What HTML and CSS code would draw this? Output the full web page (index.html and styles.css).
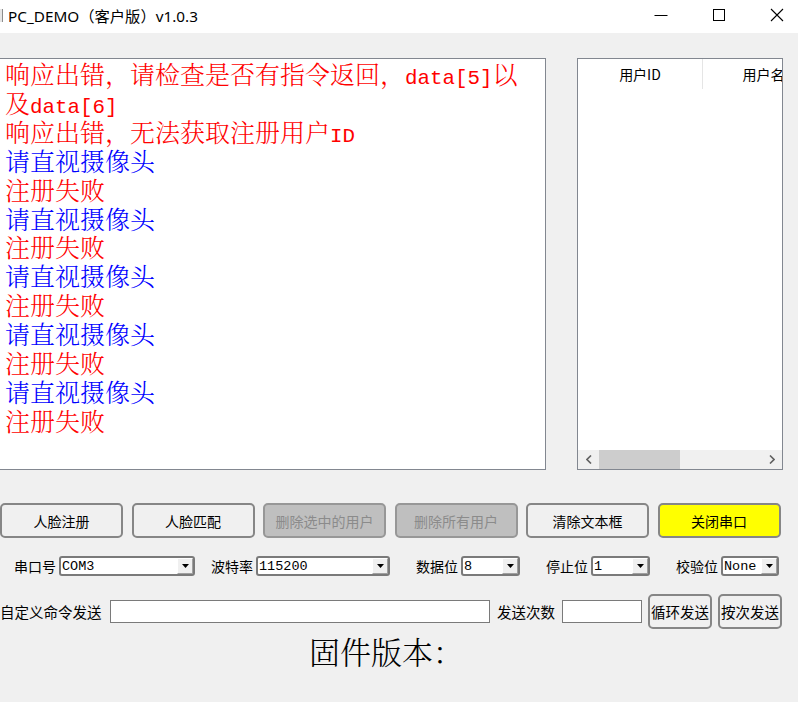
FILE: index.html
```html
<!DOCTYPE html>
<html lang="zh-CN">
<head>
<meta charset="utf-8">
<title>PC_DEMO（客户版）v1.0.3</title>
<link rel="stylesheet" href="styles.css">
</head>
<body>
<div class="window">
  <header class="titlebar">
    <span class="app-icon"></span>
    <span class="title">PC_DEMO（客户版）v1.0.3</span>
    <div class="controls">
      <button class="ctl" aria-label="minimize"><svg width="14" height="14" viewBox="0 0 14 14"><path d="M0.5 7.5H13.5" stroke="#000" stroke-width="1"/></svg></button>
      <button class="ctl" aria-label="maximize"><svg width="14" height="14" viewBox="0 0 14 14"><rect x="1.5" y="1.5" width="11" height="11" fill="none" stroke="#000" stroke-width="1"/></svg></button>
      <button class="ctl" aria-label="close"><svg width="14" height="14" viewBox="0 0 14 14"><path d="M1 1L13 13M13 1L1 13" stroke="#000" stroke-width="1.1"/></svg></button>
    </div>
  </header>

  <main class="content">
    <section class="top">
      <div class="log">
        <div class="red">响应出错，请检查是否有指令返回，<span class="lat">data[5]</span>以<br>及<span class="lat">data[6]</span></div>
        <div class="red">响应出错，无法获取注册用户<span class="lat">ID</span></div>
        <div class="blue">请直视摄像头</div>
        <div class="red">注册失败</div>
        <div class="blue">请直视摄像头</div>
        <div class="red">注册失败</div>
        <div class="blue">请直视摄像头</div>
        <div class="red">注册失败</div>
        <div class="blue">请直视摄像头</div>
        <div class="red">注册失败</div>
        <div class="blue">请直视摄像头</div>
        <div class="red">注册失败</div>
      </div>
      <div class="list">
        <div class="list-head">
          <div class="col c1">用户ID</div>
          <div class="col c2">用户名</div>
        </div>
        <div class="list-body"></div>
        <div class="hscroll">
          <span class="arr"><svg width="6" height="9" viewBox="0 0 6 9"><path d="M5 0.5L1 4.5L5 8.5" fill="none" stroke="#606060" stroke-width="1.6"/></svg></span>
          <span class="thumb"></span>
          <span class="track"></span>
          <span class="arr"><svg width="6" height="9" viewBox="0 0 6 9"><path d="M1 0.5L5 4.5L1 8.5" fill="none" stroke="#606060" stroke-width="1.6"/></svg></span>
        </div>
      </div>
    </section>

    <section class="btn-row">
      <button class="btn">人脸注册</button>
      <button class="btn">人脸匹配</button>
      <button class="btn disabled">删除选中的用户</button>
      <button class="btn disabled">删除所有用户</button>
      <button class="btn">清除文本框</button>
      <button class="btn yellow">关闭串口</button>
    </section>

    <section class="combo-row">
      <div class="field f1"><span class="lbl">串口号</span><div class="combo w1"><span class="val">COM3</span><span class="drop"><svg width="7" height="4" viewBox="0 0 7 4"><path d="M0 0H7L3.5 4Z" fill="#000"/></svg></span></div></div>
      <div class="field f2"><span class="lbl">波特率</span><div class="combo w2"><span class="val">115200</span><span class="drop"><svg width="7" height="4" viewBox="0 0 7 4"><path d="M0 0H7L3.5 4Z" fill="#000"/></svg></span></div></div>
      <div class="field f3"><span class="lbl">数据位</span><div class="combo w3"><span class="val">8</span><span class="drop"><svg width="7" height="4" viewBox="0 0 7 4"><path d="M0 0H7L3.5 4Z" fill="#000"/></svg></span></div></div>
      <div class="field f3"><span class="lbl">停止位</span><div class="combo w3"><span class="val">1</span><span class="drop"><svg width="7" height="4" viewBox="0 0 7 4"><path d="M0 0H7L3.5 4Z" fill="#000"/></svg></span></div></div>
      <div class="field f3"><span class="lbl">校验位</span><div class="combo w5"><span class="val">None</span><span class="drop"><svg width="7" height="4" viewBox="0 0 7 4"><path d="M0 0H7L3.5 4Z" fill="#000"/></svg></span></div></div>
    </section>

    <section class="send-row">
      <span class="slbl l1">自定义命令发送</span>
      <span class="input i1"></span>
      <span class="slbl l2">发送次数</span>
      <span class="input i2"></span>
      <button class="sbtn">循环发送</button>
      <button class="sbtn">按次发送</button>
    </section>

    <div class="fw">固件版本：</div>
  </main>
</div>
</body>
</html>
```

FILE: styles.css
```css
html, body {
  margin: 0;
  padding: 0;
}
body {
  width: 798px;
  height: 702px;
  overflow: hidden;
  background: #f0f0f0;
  font-family: "Noto Sans CJK SC", "Noto Sans", sans-serif;
  color: #000;
}
.window {
  width: 798px;
}
button {
  font-family: inherit;
  color: inherit;
  cursor: default;
}

/* Title bar */
.titlebar {
  height: 33px;
  box-sizing: border-box;
  padding-bottom: 3px;
  background: #fff;
  display: flex;
  align-items: center;
}
.app-icon {
  width: 2px;
  height: 13px;
  background: #e6e6e6;
  border-right: 1px solid #8c8c8c;
  margin-top: 1px;
}
.title {
  margin-left: 5px;
  font-size: 15.3px;
  font-family: "Noto Sans", "Noto Sans CJK SC", sans-serif;
}
.controls {
  margin-left: auto;
  margin-right: -8px;
  display: flex;
}
.ctl {
  width: 58px;
  height: 30px;
  border: 0;
  padding: 0;
  background: transparent;
  display: flex;
  align-items: center;
  justify-content: center;
}

/* Top area */
.top {
  display: flex;
  margin-top: 25px;
  height: 412px;
}
.log {
  margin-left: -3px;
  width: 549px;
  box-sizing: border-box;
  border: 1px solid #828790;
  background: #fff;
  padding: 0 0 0 7px;
  font-family: "Noto Serif CJK SC", "Noto Sans CJK SC", serif;
  font-weight: 300;
  font-size: 25px;
  line-height: 28.9px;
  white-space: nowrap;
  overflow: hidden;
}
.lat {
  font-family: "Liberation Mono", monospace;
  font-size: 20.8px;
  font-weight: 400;
  line-height: 0;
}
.red { color: #ff0000; }
.blue { color: #0000ff; }

.list {
  margin-left: 31px;
  width: 206px;
  box-sizing: border-box;
  border: 1px solid #828790;
  background: #fff;
  display: flex;
  flex-direction: column;
  overflow: hidden;
}
.list-head {
  display: flex;
  height: 30px;
  font-size: 14px;
  overflow: hidden;
  white-space: nowrap;
}
.col {
  flex: none;
  text-align: center;
  line-height: 31px;
}
.c1 {
  width: 124px;
  border-right: 1px solid #e5e5e5;
}
.c2 {
  width: 121px;
}
.list-body {
  flex: 1;
}
.hscroll {
  height: 19px;
  background: #f0f0f0;
  display: flex;
  align-items: stretch;
}
.arr {
  width: 21px;
  flex: none;
  display: flex;
  align-items: center;
  justify-content: center;
}
.thumb {
  width: 81px;
  flex: none;
  background: #cdcdcd;
}
.track {
  flex: 1;
}

/* Buttons row */
.btn-row {
  display: flex;
  gap: 8.5px;
  margin-top: 33px;
}
.btn {
  width: 123px;
  height: 35px;
  box-sizing: border-box;
  border: 2px solid #868686;
  border-radius: 5px;
  background: #f0f0f0;
  font-size: 14px;
  padding: 0;
}
.btn.disabled {
  background: #bfbfbf;
  color: #8b8b8b;
  border-color: #979797;
}
.btn.yellow {
  background: #ffff00;
}

/* Combo row */
.combo-row {
  display: flex;
  align-items: center;
  margin-top: 18px;
  padding-left: 14px;
  height: 20px;
  font-size: 14px;
}
.field {
  display: flex;
  align-items: center;
}
.f2 { margin-left: 16px; }
.f3 { margin-left: 26px; }
.lbl {
  width: 45px;
  white-space: nowrap;
}
.combo {
  height: 20px;
  box-sizing: border-box;
  border: 2px solid #7a7a7a;
  border-radius: 3px;
  background: #fff;
  display: flex;
  align-items: center;
}
.w1 { width: 136px; }
.w2 { width: 134px; }
.w3 { width: 59px; }
.w5 { width: 58px; }
.val {
  flex: 1;
  padding-left: 1px;
  font-family: "Liberation Mono", monospace;
  font-size: 13.5px;
  line-height: 17px;
  overflow: hidden;
}
.drop {
  width: 16px;
  height: 16px;
  box-sizing: border-box;
  border: 1px solid;
  border-color: #ffffff #a0a0a0 #a0a0a0 #ffffff;
  background: #f0f0f0;
  display: flex;
  align-items: center;
  justify-content: center;
}

/* Send row */
.send-row {
  display: flex;
  align-items: center;
  margin-top: 18px;
  height: 35px;
  font-size: 14.5px;
}
.slbl {
  white-space: nowrap;
}
.l1 { width: 110px; }
.l2 { margin-left: 7px; width: 65px; }
.input {
  height: 23px;
  box-sizing: border-box;
  border: 1px solid #7a7a7a;
  background: #fff;
}
.i1 { width: 380px; }
.i2 { width: 80px; }
.sbtn {
  margin-left: 6px;
  width: 64px;
  height: 35px;
  box-sizing: border-box;
  border: 2px solid #868686;
  border-radius: 5px;
  background: #f0f0f0;
  font-size: 14.5px;
  padding: 0;
  white-space: nowrap;
}

/* Firmware label */
.fw {
  margin-top: 4px;
  padding-left: 309px;
  font-family: "Noto Serif CJK SC", "Noto Sans CJK SC", serif;
  font-weight: 300;
  font-size: 31px;
  line-height: 36px;
}
```
